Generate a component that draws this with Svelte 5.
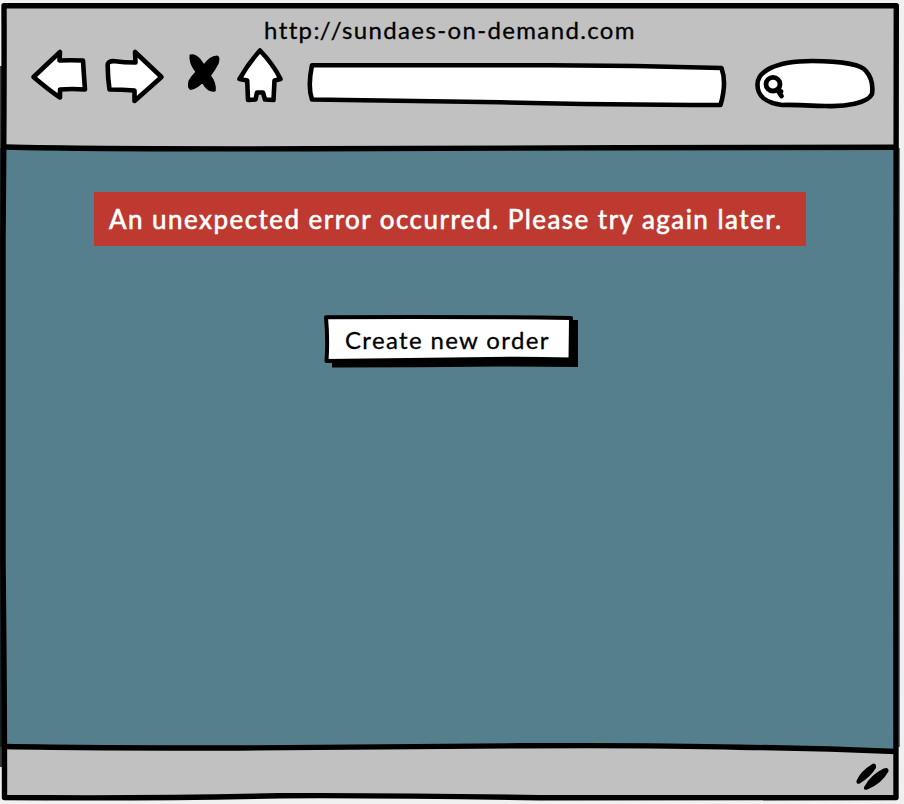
<script>
  let address = $state('');
  let query = $state('');
</script>

<div class="window">
  <header>
    <div class="title"><span>http<span class="scheme">://</span>sundaes-on-demand.com</span></div>
    <nav>
      <svg width="68" height="66" viewBox="28 44 68 66" role="img" aria-label="Back">
        <path class="shape" d="M33.5 77 60 52 59.5 60.5Q70 60 83 60.5Q83.8 74 85 89.5Q72 88.5 60 89.5L60 97.5Q50 91 33.5 77Z" />
      </svg>
      <svg width="76" height="66" viewBox="96 44 76 66" role="img" aria-label="Forward">
        <path class="shape" d="M161.5 77 135 52 135.5 62.5Q124 62.5 115 61.2Q107 60.5 107.7 66Q107.7 77 109.5 89.5Q122 89.5 134.5 90.5L134.5 101Q147 90 161.5 77Z" />
      </svg>
      <svg width="60" height="66" viewBox="172 44 60 66" role="img" aria-label="Stop">
        <path class="cross" d="M190.5 55.5Q195 54.5 200 60L204 65.5Q210 57 217 56.5Q219.5 57 217.8 63Q214.5 69.5 210 75.5Q215.5 83 214.8 90.5Q209.5 91.5 205.5 86.5L202.3 81.5Q197.5 88 190.5 89Q188 87.5 189.5 81Q192.5 76 196.5 72Q189.5 63 190.5 55.5Z" />
      </svg>
      <svg width="60" height="66" viewBox="232 44 60 66" role="img" aria-label="Home">
        <path class="shape" d="M260 50.5Q248 64 239.5 79L247.2 80.5 248 100 255.5 99.5 257 92.5H263L265 99.5 273.5 100 274.5 80.5 280.5 79Q273 64 260 50.5Z" />
      </svg>
      <div class="field address">
        <svg width="448" height="66" viewBox="292 44 448 66" aria-hidden="true">
          <path class="shape" d="M312 65.3Q420 65.5 550 65.2Q635 65.2 721.5 68Q727 83 720.5 105Q600 104.8 500 102.3Q400 101 312 99.5Q307.5 87 312 65.3Z" />
        </svg>
        <input aria-label="Address" bind:value={address} />
      </div>
      <div class="field search">
        <svg width="150" height="66" viewBox="740 44 150 66" aria-hidden="true">
          <path class="shape" d="M757.5 85C757 72 774 61 812 61C842 61 862 65 866 71C872 78 873 87 872 94C868 103 845 107 826 106C809 106 797 104.5 782 105C765 103 757.5 95 757.5 85Z" />
          <ellipse class="lens" cx="773" cy="84.2" rx="7" ry="6.8" />
          <path class="lens" d="M776.5 90 781 91.5M778.5 91.5 781.5 96" />
        </svg>
        <input aria-label="Search" bind:value={query} />
      </div>
    </nav>
  </header>

  <main>
    <div class="alert"><span>An unexpected error occurred. Please try again later.</span></div>
    <button>
      <svg width="256" height="54" viewBox="323 314 256 54" aria-hidden="true">
        <path d="M332 320H578V367L500 366.5 420 367.3 332 367.5Z" />
        <path class="outline-box" d="M326 317.3Q440 316.3 571 318L570.5 359.4Q520 358 470 359.2L326.5 361Q328 340 326 317.3Z" />
      </svg>
      <span>Create new order</span>
    </button>
  </main>

  <footer>
    <svg width="46" height="46" viewBox="850 753 46 46" role="img" aria-label="Resize">
      <path class="grip" d="M857.5 782Q861 773 872.5 766Q875.5 764.5 875 768.5Q870 777 859.5 783.5Q857 784.5 857.5 782ZM865 788.5Q871 777 884 770.5Q888 769 887.5 772Q881 784 867 789.5Q864.5 790.5 865 788.5Z" />
    </svg>
  </footer>

  <svg class="frame" width="904" height="804" viewBox="0 0 904 804" aria-hidden="true">
    <path class="wedge" d="M740 746H896V751.5Q820 748.3 740 747.2Z" />
    <path d="M4 5.7H896.3Q895.2 220 895.8 420Q896.5 620 896 797.6Q700 798.3 540 797.8Q400 795.2 280 795.7Q150 798.8 4.5 797.5Q4.6 700 3 560Q2.4 380 3 240Q4.4 100 4 5.7Z" />
    <path class="edge" d="M1 66V767" />
    <path d="M4 147Q100 149.2 310 148.8Q480 147.8 620 147.8 760 147 896 147.2" />
    <path d="M4 746.5Q90 748 240 748Q400 747.3 520 745.8Q650 745 740 747.2Q820 748.3 896 751.5" />
  </svg>
</div>

<style>
  :global(body) {
    margin: 0;
    background: #f0f0f0;
  }

  .window {
    position: relative;
    display: flex;
    flex-direction: column;
    width: 904px;
    height: 804px;
    overflow: hidden;
    font-family: Lato, 'Open Sans', sans-serif;
    color: #000;
    -webkit-text-stroke: 0.3px currentColor;
  }

  header,
  footer {
    box-sizing: border-box;
    width: 893px;
    margin-left: 3px;
    background: #c1c1c1;
  }

  header {
    height: 144px;
    margin-top: 4px;
    padding-left: 1px;
  }

  .title {
    display: flex;
    justify-content: center;
    height: 40px;
    font-size: 24px;
    line-height: 52px;
    letter-spacing: 1.36px;
    white-space: nowrap;
  }

  .scheme {
    font-kerning: none;
    letter-spacing: 0.3px;
  }

  nav {
    display: flex;
    padding-left: 24px;
  }

  svg {
    display: block;
    flex: none;
  }

  .shape,
  .lens {
    fill: #fff;
    stroke: #000;
    stroke-width: 4.6;
    stroke-linejoin: round;
    stroke-linecap: round;
  }

  .lens {
    stroke-width: 4.8;
  }

  .cross,
  .grip {
    stroke: #000;
    stroke-width: 2;
    stroke-linejoin: round;
  }

  .field {
    display: grid;
  }

  .field > * {
    grid-area: 1 / 1;
  }

  input {
    min-width: 0;
    margin: 25px 26px 12px 28px;
    padding: 0;
    border: 0;
    outline: 0;
    background: transparent;
    font: 20px Lato, sans-serif;
  }

  .search input {
    margin: 25px 24px 12px 48px;
  }

  main {
    box-sizing: border-box;
    flex: 1;
    display: flex;
    flex-direction: column;
    align-items: center;
    width: 900px;
    padding-top: 44px;
    background: #557f8c;
  }

  .alert {
    box-sizing: border-box;
    width: 712px;
    height: 54px;
    padding-left: 15px;
    background: #be3930;
    color: #fff;
    font-size: 26px;
    line-height: 55px;
    letter-spacing: 1.46px;
    white-space: nowrap;
    -webkit-text-stroke-width: 0.6px;
  }

  button {
    display: grid;
    width: 256px;
    height: 54px;
    margin: 68px 0 0 2px;
    padding: 0;
    border: 0;
    background: none;
    color: inherit;
    font: 24px Lato, sans-serif;
    letter-spacing: 1.35px;
    white-space: nowrap;
    cursor: pointer;
  }

  button > * {
    grid-area: 1 / 1;
  }

  button span {
    z-index: 1;
    padding-left: 22px;
    line-height: 51px;
    text-align: left;
  }

  .outline-box {
    fill: #fff;
    stroke: #000;
    stroke-width: 4;
    stroke-linejoin: round;
  }

  footer {
    display: flex;
    justify-content: flex-end;
    height: 51px;
    padding-top: 5px;
    margin-bottom: 6px;
  }

  .frame {
    position: absolute;
    inset: 0;
    pointer-events: none;
  }

  .frame path {
    fill: none;
    stroke: #000;
    stroke-width: 5.4;
    stroke-linejoin: round;
  }

  .frame .wedge {
    fill: #557f8c;
    stroke: none;
  }

  .frame .edge {
    stroke-width: 2;
    opacity: 0.75;
  }
</style>
